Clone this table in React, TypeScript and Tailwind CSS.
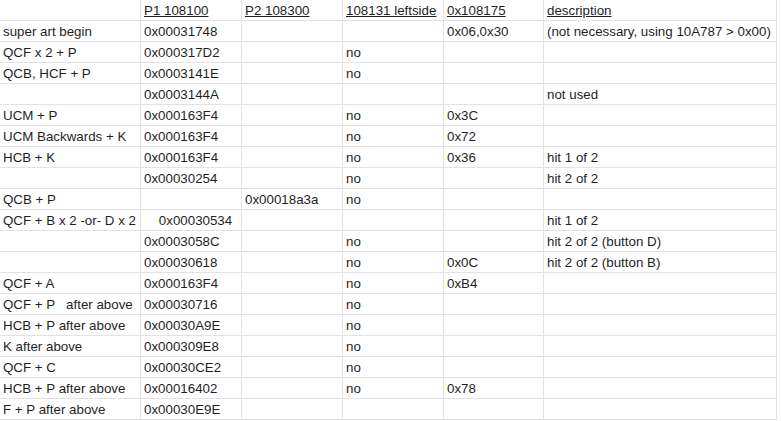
const widths = ['w-[141px]', 'w-[101px]', 'w-[101px]', 'w-[101px]', 'w-[100px]', 'w-[233px]'];

const header = ['', 'P1 108100', 'P2 108300', '108131 leftside', '0x108175', 'description'];

const rows: string[][] = [
  ['super art begin', '0x00031748', '', '', '0x06,0x30', '(not necessary, using 10A787 > 0x00)'],
  ['QCF x 2 + P', '0x000317D2', '', 'no', '', ''],
  ['QCB, HCF + P', '0x0003141E', '', 'no', '', ''],
  ['', '0x0003144A', '', '', '', 'not used'],
  ['UCM + P', '0x000163F4', '', 'no', '0x3C', ''],
  ['UCM Backwards + K', '0x000163F4', '', 'no', '0x72', ''],
  ['HCB + K', '0x000163F4', '', 'no', '0x36', 'hit 1 of 2'],
  ['', '0x00030254', '', 'no', '', 'hit 2 of 2'],
  ['QCB + P', '', '0x00018a3a', 'no', '', ''],
  ['QCF + B x 2 -or- D x 2', '    0x00030534', '', '', '', 'hit 1 of 2'],
  ['', '0x0003058C', '', 'no', '', 'hit 2 of 2 (button D)'],
  ['', '0x00030618', '', 'no', '0x0C', 'hit 2 of 2 (button B)'],
  ['QCF + A', '0x000163F4', '', 'no', '0xB4', ''],
  ['QCF + P   after above', '0x00030716', '', 'no', '', ''],
  ['HCB + P after above', '0x00030A9E', '', 'no', '', ''],
  ['K after above', '0x000309E8', '', 'no', '', ''],
  ['QCF + C', '0x00030CE2', '', 'no', '', ''],
  ['HCB + P after above', '0x00016402', '', 'no', '0x78', ''],
  ['F + P after above', '0x00030E9E', '', '', '', ''],
];

const Row = ({ cells, head }: { cells: string[]; head?: boolean }) => (
  <div className="flex">
    {cells.map((c, i) => (
      <div
        key={i}
        className={`${widths[i]} h-[21px] shrink-0 border-r border-b border-[#e2e2e2] pl-[3px] pt-px leading-[19px] whitespace-pre overflow-visible`}
      >
        {head ? <span className="underline">{c}</span> : c}
      </div>
    ))}
  </div>
);

export default function App() {
  return (
    <div
      className="w-[781px] h-[421px] overflow-hidden bg-white text-[13.33px] text-[#1f1f1f]"
      style={{ fontFamily: '"Liberation Sans", Arial, sans-serif' }}
    >
      <Row cells={header} head />
      {rows.map((r, i) => (
        <Row key={i} cells={r} />
      ))}
    </div>
  );
}
